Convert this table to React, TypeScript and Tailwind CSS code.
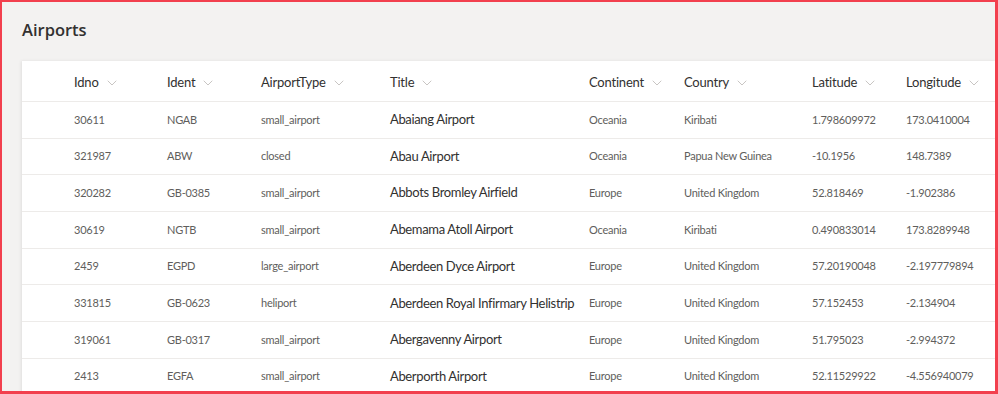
import { ChevronDown } from 'lucide-react'

const COLUMNS = [
  { key: 'idno', label: 'Idno', w: 'w-[93px]' },
  { key: 'ident', label: 'Ident', w: 'w-[94px]' },
  { key: 'type', label: 'AirportType', w: 'w-[129px]' },
  { key: 'title', label: 'Title', w: 'w-[199px]' },
  { key: 'continent', label: 'Continent', w: 'w-[95px]' },
  { key: 'country', label: 'Country', w: 'w-[128px]' },
  { key: 'lat', label: 'Latitude', w: 'w-[94px]' },
  { key: 'lng', label: 'Longitude', w: 'flex-1' },
]

const ROWS = [
  ['30611', 'NGAB', 'small_airport', 'Abaiang Airport', 'Oceania', 'Kiribati', '1.798609972', '173.0410004'],
  ['321987', 'ABW', 'closed', 'Abau Airport', 'Oceania', 'Papua New Guinea', '-10.1956', '148.7389'],
  ['320282', 'GB-0385', 'small_airport', 'Abbots Bromley Airfield', 'Europe', 'United Kingdom', '52.818469', '-1.902386'],
  ['30619', 'NGTB', 'small_airport', 'Abemama Atoll Airport', 'Oceania', 'Kiribati', '0.490833014', '173.8289948'],
  ['2459', 'EGPD', 'large_airport', 'Aberdeen Dyce Airport', 'Europe', 'United Kingdom', '57.20190048', '-2.197779894'],
  ['331815', 'GB-0623', 'heliport', 'Aberdeen Royal Infirmary Helistrip', 'Europe', 'United Kingdom', '57.152453', '-2.134904'],
  ['319061', 'GB-0317', 'small_airport', 'Abergavenny Airport', 'Europe', 'United Kingdom', '51.795023', '-2.994372'],
  ['2413', 'EGFA', 'small_airport', 'Aberporth Airport', 'Europe', 'United Kingdom', '52.11529922', '-4.556940079'],
]

export default function App() {
  return (
    <div className="flex h-[394px] w-[998px] flex-col overflow-hidden border-t-2 border-l-2 border-r-[3px] border-b-[3px] border-[#f2404e] bg-[#f3f2f1] font-['Lato',sans-serif] text-[#323130]">
      {/* Page title */}
      <div className="flex h-[59px] shrink-0 items-center pl-5 pb-[3px]">
        <h1 className="font-['Open_Sans',sans-serif] text-[16.5px] font-semibold">Airports</h1>
      </div>

      {/* List */}
      <div className="ml-5 flex-1 bg-white shadow-[-1px_0_3px_rgba(0,0,0,0.08)]">
        <div className="flex h-[41px] items-center border-b border-[#edebe9] pl-[52px] pt-1">
          {COLUMNS.map(c => (
            <div key={c.key} className={`${c.w} flex items-center gap-[5px] text-[13px] tracking-[-0.2px]`}>
              <span>{c.label}</span>
              <ChevronDown className="h-4 w-4 text-[#b3b0ad]" strokeWidth={1.1} />
            </div>
          ))}
        </div>

        {ROWS.map(row => (
          <div key={row[0]} className="flex h-[36.7px] items-center border-b border-[#edebe9] pl-[52px]">
            {row.map((cell, i) => (
              <div
                key={i}
                className={`${COLUMNS[i].w} whitespace-nowrap ${
                  i === 3
                    ? 'text-[13px] tracking-[-0.35px] text-[#323130]'
                    : 'text-[11px] tracking-[-0.25px] text-[#605e5c]'
                }`}
              >
                {cell}
              </div>
            ))}
          </div>
        ))}
      </div>
    </div>
  )
}
